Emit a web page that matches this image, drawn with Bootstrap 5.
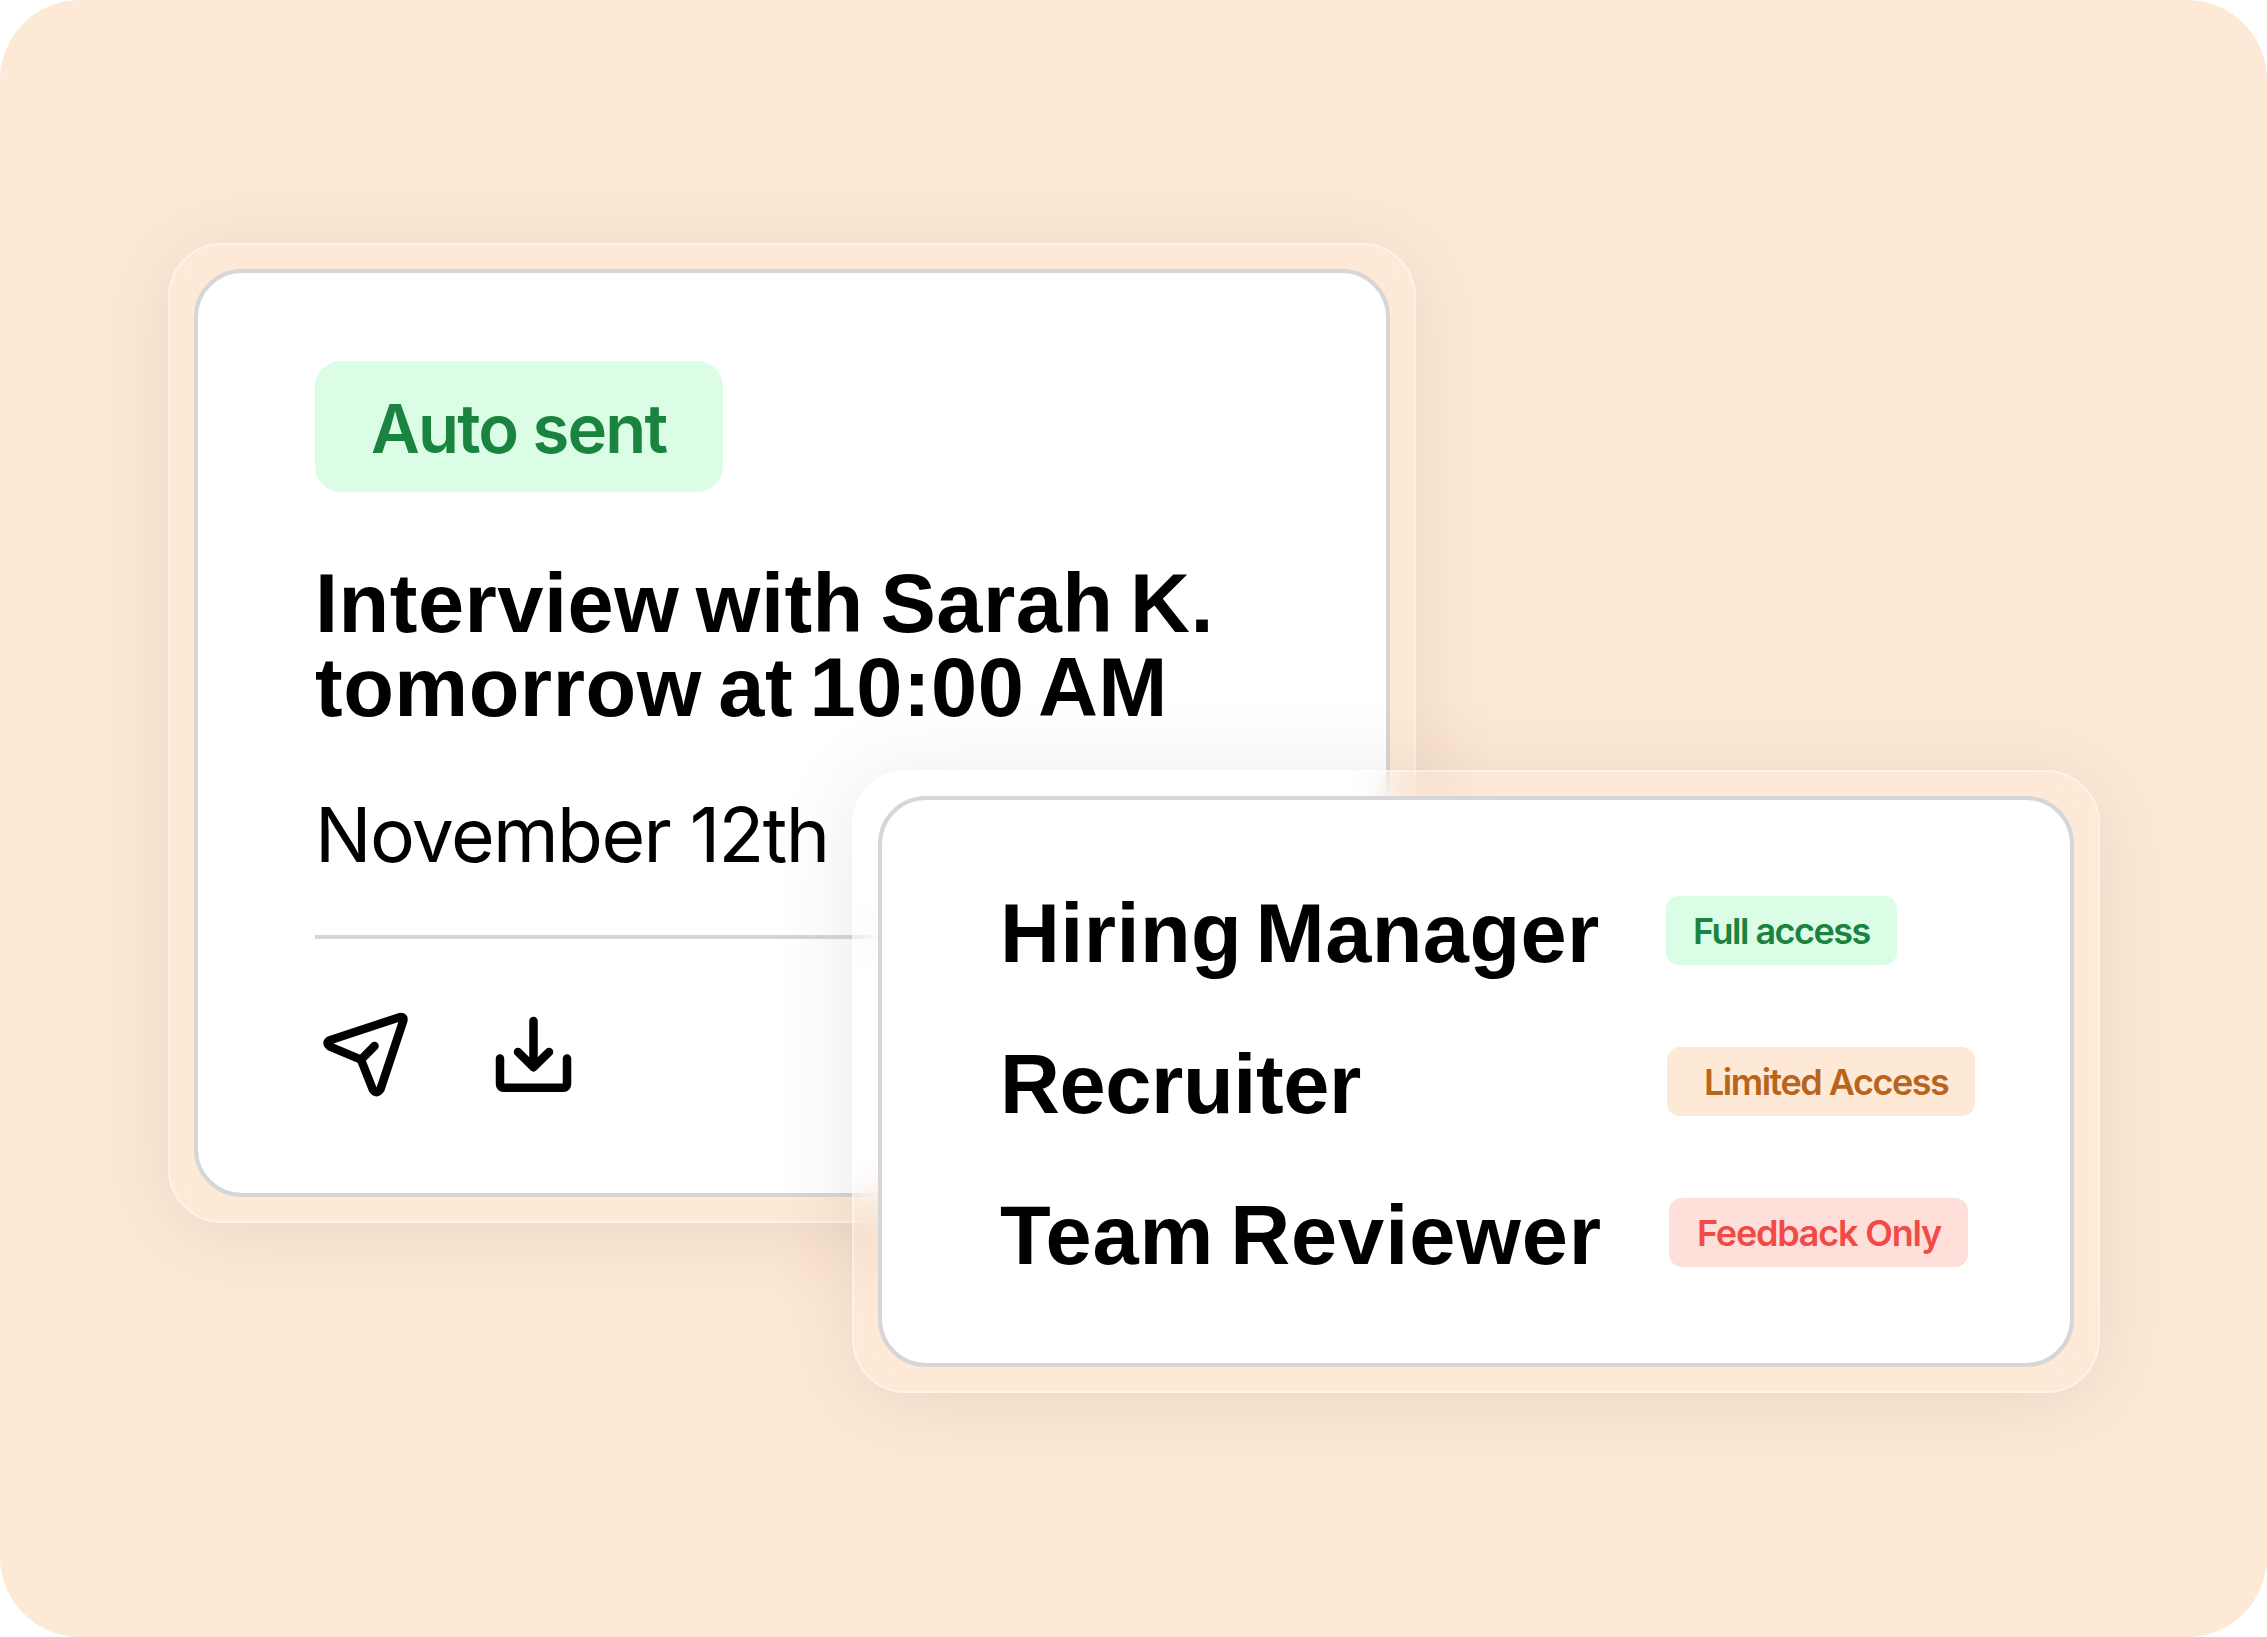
<!DOCTYPE html>
<html lang="en">
<head>
    <meta charset="UTF-8">
    <meta name="viewport" content="width=device-width, initial-scale=1">
    <title>Interview Access</title>
    <link href="https://cdn.jsdelivr.net/npm/bootstrap@5.3.0/dist/css/bootstrap.min.css" rel="stylesheet">
    <style>
        body {
            background-color: #fff;
            color: #000;
            font-family: Inter, "Liberation Sans", sans-serif;
        }
        .stage {
            width: 2267px;
            height: 1637px;
            padding: 243px 0 0 168px;
            background-color: #fee9d7;
            border-radius: 80px;
        }
        .glass {
            width: 1248px;
            padding: 24px;
            border: 2px solid rgba(255, 255, 255, .4);
            border-radius: 54px;
            box-shadow: 0 8px 84px rgba(70, 50, 30, .105);
            backdrop-filter: blur(18px);
        }
        .panel {
            background-color: #fff;
            border: 4px solid #d6d6d9;
            border-radius: 48px;
        }
        .glass-event {
            height: 980px;
        }
        .panel-event {
            padding: 88px 117px 0;
        }
        /* floats over the lower right corner of the event card */
        .glass-roles {
            left: 852px;
            top: 770px;
            height: 623px;
        }
        .panel-roles {
            padding: 96px 0 0 118px;
        }
        .pill {
            border-radius: 13px;
            height: 69px;
            padding-top: 1px;
            font-size: 36px;
            font-weight: 600;
            letter-spacing: -1.5px;
            white-space: nowrap;
        }
        .pill-sent {
            width: 408px;
            height: 131px;
            padding: 5px 0 0 56px;
            border-radius: 26px;
            font-size: 67px;
            letter-spacing: -1.8px;
        }
        .pill-green {
            background-color: #dbfde5;
            color: #1a8340;
        }
        .pill-orange {
            background-color: #fee9d7;
            color: #b8651b;
        }
        .pill-red {
            background-color: #ffdfda;
            color: #f24a46;
        }
        .pill-full {
            width: 231px;
            margin-left: 1px;
            padding-left: 27px;
        }
        .pill-limited {
            width: 308px;
            margin-left: 2px;
            padding-left: 37px;
        }
        .pill-feedback {
            width: 299px;
            margin-left: 4px;
            padding-left: 28px;
            letter-spacing: -1.2px;
        }
        .event-title,
        .role-name {
            font-family: "Liberation Sans", Arial, sans-serif;
            font-size: 83px;
            font-weight: 700;
            white-space: nowrap;
        }
        .event-title {
            margin: 70px 0 60px;
            line-height: 84px;
            letter-spacing: .5px;
            word-spacing: -7px;
        }
        .event-date {
            font-size: 75px;
            line-height: 90px;
            letter-spacing: -1.6px;
        }
        .divider {
            height: 4px;
            margin: 55px 0 70px;
            background-color: #d6d6d9;
        }
        .event-actions {
            gap: 68px;
        }
        .event-actions svg {
            width: 100px;
            height: 100px;
            fill: none;
            stroke: #000;
            stroke-width: 8.5;
            stroke-linecap: round;
            stroke-linejoin: round;
        }
        .roles {
            gap: 79px;
        }
        .role-name {
            width: 665px;
            padding-top: 3px;
            line-height: 69px;
            letter-spacing: .4px;
            word-spacing: -10px;
        }
        .role-name-short {
            letter-spacing: -.4px;
        }
        .role-name-wide {
            letter-spacing: .9px;
            word-spacing: -8px;
        }
    </style>
</head>
<body>

<div class="stage position-relative overflow-hidden">

    <div class="glass glass-event">
        <div class="panel panel-event h-100">
            <div class="pill pill-sent pill-green d-flex align-items-center">Auto sent</div>
            <h1 class="event-title">Interview with Sarah K.<br>tomorrow at 10:00 AM</h1>
            <p class="event-date mb-0">November 12th</p>
            <div class="divider"></div>
            <div class="event-actions d-flex">
                <!-- send -->
                <svg viewBox="315 1009 100 100">
                    <path d="M329.800 1040.200 399.500 1017.200Q404.600 1016.200 403.200 1021L380.500 1089.200Q376.500 1095 372.800 1089.500L361 1059.700 330 1046.600Q325.200 1043 329.800 1040.200ZM361 1059.700 374.500 1046"/>
                </svg>
                <!-- download -->
                <svg viewBox="483 1009 100 100">
                    <path d="M533.500 1021V1066.500M518 1052 533.500 1067.200 549 1052M500 1058.500V1084Q500 1087.800 503.800 1087.800H563.200Q567 1087.800 567 1084V1058.500"/>
                </svg>
            </div>
        </div>
    </div>

    <div class="glass glass-roles position-absolute">
        <div class="panel panel-roles h-100">
            <div class="roles d-flex flex-column">
                <div class="d-flex">
                    <div class="role-name">Hiring Manager</div>
                    <div class="pill pill-green pill-full d-flex align-items-center">Full access</div>
                </div>
                <div class="d-flex">
                    <div class="role-name role-name-short">Recruiter</div>
                    <div class="pill pill-orange pill-limited d-flex align-items-center">Limited Access</div>
                </div>
                <div class="d-flex">
                    <div class="role-name role-name-wide">Team Reviewer</div>
                    <div class="pill pill-red pill-feedback d-flex align-items-center">Feedback Only</div>
                </div>
            </div>
        </div>
    </div>

</div>

<script src="https://cdn.jsdelivr.net/npm/bootstrap@5.3.0/dist/js/bootstrap.bundle.min.js"></script>
</body>
</html>
